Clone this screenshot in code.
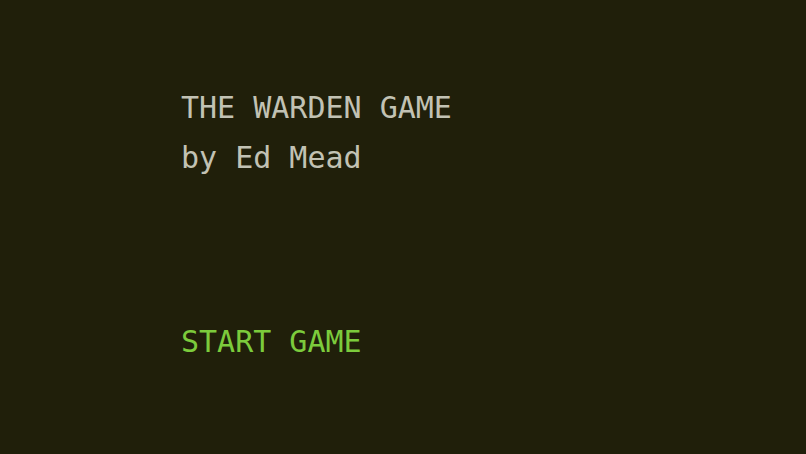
export default function App() {
  return (
    <div
      className="min-h-[454px] w-full bg-[#201f0a] pl-[181px] pt-[83px]"
      style={{ fontFamily: '"DejaVu Sans Mono", monospace' }}
    >
      <div className="text-[30px] leading-[50px] text-[#c2c2b4]">
        <div>THE WARDEN GAME</div>
        <div>by Ed Mead</div>
      </div>
      <div className="mt-[134px]">
        <button className="text-[30px] leading-[50px] text-[#7ccb3c]">START GAME</button>
      </div>
    </div>
  )
}
